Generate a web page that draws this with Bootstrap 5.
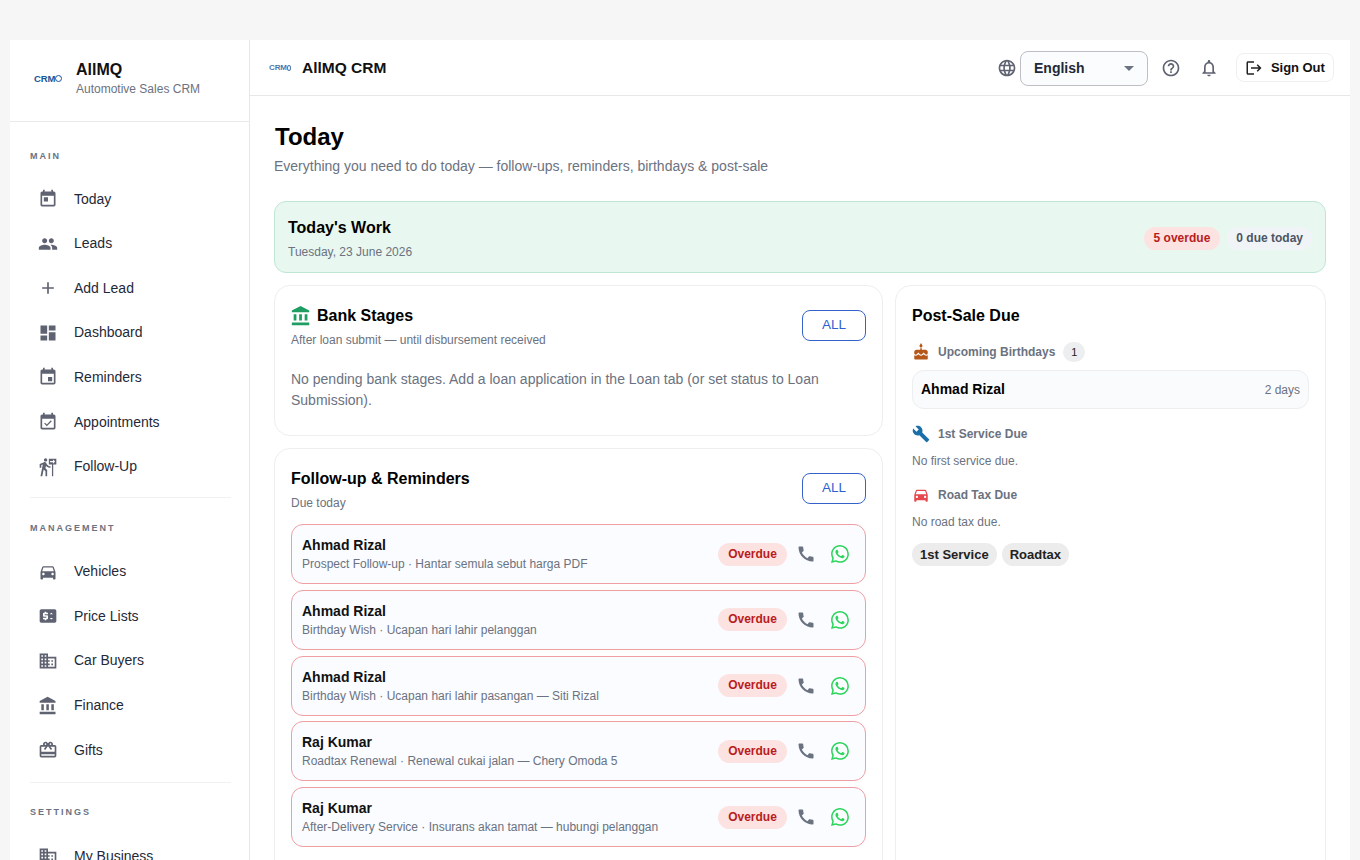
<!DOCTYPE html>
<html lang="en">
<head>
  <meta charset="UTF-8" />
  <title>AllMQ CRM - Today</title>
  <link href="https://cdn.jsdelivr.net/npm/bootstrap@5.3.3/dist/css/bootstrap.min.css" rel="stylesheet">
  <style>
    html, body { height: 860px; overflow: hidden; }
    body { background: #f6f6f6; padding: 40px 10px 0; font-family: "Liberation Sans", Arial, sans-serif; font-size: 14px; color: #111; }
    .app-frame { background: #fff; height: 820px; overflow: hidden; }
    .side-bar { width: 240px; flex: none; border-right: 1px solid #e6e7e9; }
    .side-head { height: 82px; padding: 0 0 4px 23px; border-bottom: 1px solid #e9eaec; }
    .crm-logo { color: #1a5596; font-weight: 700; line-height: 1; display: inline-flex; align-items: center; }
    .crm-logo i { display: inline-block; border: 1.5px solid #1a5596; border-radius: 50%; width: 7px; height: 7px; margin-left: 0; }
    .logo-lg { font-size: 9.5px; letter-spacing: -.1px; width: 35px; padding-left: 1px; }
    .logo-sm { font-size: 8px; letter-spacing: -.1px; width: 23px; padding-left: 1px; opacity: .8; }
    .logo-sm i { width: 6px; height: 6px; }
    .brand-name { font-size: 16px; font-weight: 700; line-height: 18px; color: #111; }
    .brand-sub { font-size: 12px; line-height: 16px; color: #6b7280; margin-top: 2px; }
    .side-nav { padding: 0 18px 0 20px; }
    .nav-title { font-size: 9px; font-weight: 700; letter-spacing: 2px; color: #6b7280; line-height: 12px; padding-top: 24px; padding-bottom: 15px; }
    .nav-first { padding-top: 28px; padding-bottom: 14.8px; }
    .nav-last { padding-top: 23px; padding-bottom: 16px; }
    .nav-row { display: flex; align-items: center; height: 44.6px; padding-left: 8px; color: #1f2937; font-size: 14px; text-decoration: none; }
    .nav-row svg { width: 20px; height: 20px; fill: #5f6270; margin-right: 16px; flex: none; }
    .nav-rule { border-top: 1px solid #f0f1f3; margin-top: 8.5px; }
    .nav-rule-low { margin-top: 9.5px; }
    .top-bar { height: 56px; padding: 0 16px 0 18px; border-bottom: 1px solid #e6e7e9; }
    .top-title { font-size: 15.5px; font-weight: 700; color: #111; margin-left: 11px; }
    .top-ico { width: 20px; height: 20px; fill: #5f6270; flex: none; }
    .globe-ico { margin-right: 3px; }
    .help-ico { margin-left: 13px; }
    .bell-ico { margin-left: 18px; margin-right: 17px; }
    .lang-select { width: 128px; height: 35px; margin-top: 1px; border: 1px solid #bdbfc4; border-radius: 8px; background: #fbfcfd; padding: 0 13px; font-weight: 700; color: #1f2937; }
    .lang-caret { width: 0; height: 0; border-left: 5.5px solid transparent; border-right: 5.5px solid transparent; border-top: 5.5px solid #6b7280; }
    .sign-btn { height: 29px; width: 98px; border: 1px solid #eef0f2; border-radius: 8px; background: #fff; font-size: 13px; font-weight: 700; color: #111; padding: 0 0 0 8px; letter-spacing: -.05px; }
    .sign-btn svg { width: 18px; height: 18px; fill: #222; margin-right: 8px; }
    .page-body { padding: 0 24px; }
    .page-title { font-size: 24px; font-weight: 700; line-height: 28px; color: #000; margin: 27px 0 0 1px; }
    .page-sub { font-size: 14px; line-height: 20px; color: #6b7280; margin-top: 5px; }
    .work-banner { height: 72px; margin-top: 25px; background: #e8f7ef; border: 1px solid #bfe6d5; border-radius: 12px; padding: 3px 13px 0 13px; }
    .work-title { font-size: 16px; font-weight: 700; line-height: 20px; color: #000; }
    .work-date { font-size: 12px; line-height: 16px; color: #6b7280; margin-top: 6px; }
    .pill-red { background: #fde2e2; color: #b91c1c; font-size: 12px; font-weight: 700; line-height: 23px; padding: 0 10px; border-radius: 12px; }
    .pill-grey { background: #f1f4f6; color: #4b5563; font-size: 12px; font-weight: 700; line-height: 23px; padding: 0 9px; border-radius: 12px; margin-left: 7px; }
    .col-wrap { display: flex; column-gap: 12px; margin-top: 12px; }
    .col-main { width: 609px; flex: none; }
    .col-side { width: 431px; flex: none; }
    .panel { background: #fff; border: 1px solid #eceef0; border-radius: 16px; padding: 19px 16px 16px; }
    .panel-bank { height: 151px; }
    .panel-due { height: 500px; margin-top: 12px; }
    .panel-post { height: 663px; }
    .panel-title { font-size: 16px; font-weight: 700; line-height: 22px; color: #000; }
    .panel-title svg { width: 22px; height: 22px; fill: #1f9d62; margin: -1px 5px 0 -1px; }
    .panel-sub { font-size: 12px; line-height: 16px; color: #6b7280; margin-top: 5px; }
    .panel-head { margin-bottom: 13px; }
    .all-btn { width: 64px; height: 31px; margin-top: 5px; border: 1px solid #3563c9; border-radius: 8px; background: #fff; color: #2f5fce; font-size: 13.5px; padding: 0; }
    .panel-empty { font-size: 14px; line-height: 21px; color: #6b7280; margin-top: 21px; }
    .due-row { height: 60px; margin-top: 5.8px; border: 1px solid #ef9ea3; border-radius: 12px; background: #fafcff; padding: 0 15px 0 10px; }
    .due-name { font-size: 14px; font-weight: 700; line-height: 18px; color: #111; }
    .due-note { font-size: 12px; line-height: 16px; color: #6b7280; margin-top: 2px; }
    .due-pill { background: #fde2e2; color: #b91c1c; font-size: 12px; font-weight: 700; line-height: 23px; width: 69px; text-align: center; border-radius: 12px; margin-right: 9px; }
    .call-ico { width: 20px; height: 20px; fill: #6b7280; margin-right: 15px; }
    .wa-ico { width: 18px; height: 18px; fill: #2bd45a; margin-right: 1px; }
    .post-head { font-size: 12px; font-weight: 700; line-height: 16px; color: #6b7280; }
    .post-head svg { width: 18px; height: 18px; margin-right: 8px; flex: none; }
    .head-bday { margin-top: 15px; }
    .head-service { margin-top: 16px; }
    .head-tax { margin-top: 17px; }
    .count-dot { background: #eceef0; color: #222; font-size: 11px; font-weight: 400; width: 22px; height: 20px; line-height: 20px; text-align: center; border-radius: 10px; margin-left: 8px; }
    .bday-row { height: 39px; margin-top: 8px; border: 1px solid #eceef0; border-radius: 12px; background: #fafbfc; padding: 0 8px; }
    .bday-name { font-size: 14px; font-weight: 700; color: #000; }
    .bday-days { font-size: 12px; color: #6b7280; }
    .post-empty { font-size: 12px; line-height: 16px; color: #6b7280; margin-top: 10px; }
    .tag-row { display: flex; column-gap: 5px; margin-top: 13px; }
    .tag-pill { background: #ececec; color: #222; font-size: 13px; font-weight: 700; line-height: 23px; padding: 0 8px; border-radius: 12px; }
  </style>
</head>
<body>

<!-- shared icons -->
<svg width="0" height="0" class="position-absolute">
  <symbol id="i-today" viewBox="0 0 24 24"><path d="M19 3h-1V1h-2v2H8V1H6v2H5c-1.11 0-1.99.9-1.99 2L3 19c0 1.1.89 2 2 2h14c1.1 0 2-.9 2-2V5c0-1.1-.9-2-2-2zm0 16H5V8h14v11zM7 10h5v5H7z"/></symbol>
  <symbol id="i-people" viewBox="0 0 24 24"><path d="M16 11c1.66 0 2.99-1.34 2.99-3S17.66 5 16 5c-1.66 0-3 1.34-3 3s1.34 3 3 3zm-8 0c1.66 0 2.99-1.34 2.99-3S9.66 5 8 5C6.34 5 5 6.34 5 8s1.34 3 3 3zm0 2c-2.33 0-7 1.17-7 3.5V19h14v-2.5c0-2.33-4.67-3.5-7-3.5zm8 0c-.29 0-.62.02-.97.05 1.16.84 1.97 1.97 1.97 3.45V19h6v-2.5c0-2.33-4.67-3.5-7-3.5z"/></symbol>
  <symbol id="i-add" viewBox="0 0 24 24"><path d="M19 13h-6v6h-2v-6H5v-2h6V5h2v6h6v2z"/></symbol>
  <symbol id="i-dash" viewBox="0 0 24 24"><path d="M3 13h8V3H3v10zm0 8h8v-6H3v6zm10 0h8V11h-8v10zm0-18v6h8V3h-8z"/></symbol>
  <symbol id="i-event" viewBox="0 0 24 24"><path d="M17 12h-5v5h5v-5zM16 1v2H8V1H6v2H5c-1.11 0-1.99.9-1.99 2L3 19c0 1.1.89 2 2 2h14c1.1 0 2-.9 2-2V5c0-1.1-.9-2-2-2h-1V1h-2zm3 18H5V8h14v11z"/></symbol>
  <symbol id="i-appt" viewBox="0 0 24 24"><path d="M16.53 11.06L15.47 10l-4.88 4.88-2.12-2.12-1.06 1.06L10.59 17l5.94-5.94zM19 3h-1V1h-2v2H8V1H6v2H5c-1.11 0-1.99.9-1.99 2L3 19c0 1.1.89 2 2 2h14c1.1 0 2-.9 2-2V5c0-1.1-.9-2-2-2zm0 16H5V8h14v11z"/></symbol>
  <symbol id="i-follow" viewBox="0 0 24 24"><path d="M9.12 5.5c1.1 0 2-.9 2-2s-.9-2-2-2-2 .9-2 2 .9 2 2 2zM5.75 8.9L3 23h2.1l1.75-8L9 17v6h2v-7.55L8.95 13.4l.6-3C10.85 12 12.8 13 15 13v-2c-1.85 0-3.45-1-4.35-2.45l-.95-1.6C9.35 6.35 8.7 6 8 6c-.25 0-.5.05-.75.15L2 8.3V13h2V9.65l1.75-.75M13 2v7h3.75v14h1.5V9H22V2h-9zm5.01 6V6.25H14.5v-1.5h3.51V3l2.49 2.5L18.01 8z"/></symbol>
  <symbol id="i-car" viewBox="0 0 24 24"><path d="M18.92 6.01C18.72 5.42 18.16 5 17.5 5h-11c-.66 0-1.21.42-1.42 1.01L3 12v8c0 .55.45 1 1 1h1c.55 0 1-.45 1-1v-1h12v1c0 .55.45 1 1 1h1c.55 0 1-.45 1-1v-8l-2.08-5.99zM6.5 16c-.83 0-1.5-.67-1.5-1.5S5.67 13 6.5 13s1.5.67 1.5 1.5S7.33 16 6.5 16zm11 0c-.83 0-1.5-.67-1.5-1.5s.67-1.5 1.5-1.5 1.5.67 1.5 1.5-.67 1.5-1.5 1.5zM5 11l1.5-4.5h11L19 11H5z"/></symbol>
  <symbol id="i-price" viewBox="0 0 24 24"><path d="M20 4H4c-1.11 0-1.99.89-1.99 2L2 18c0 1.11.89 2 2 2h16c1.11 0 2-.89 2-2V6c0-1.11-.89-2-2-2zm-8 6H8v1h3c.55 0 1 .45 1 1v3c0 .55-.45 1-1 1h-1v1H8v-1H6v-2h4v-1H7c-.55 0-1-.45-1-1V9c0-.55.45-1 1-1h1V7h2v1h2v2zm4 6.25l-2-2h4l-2 2zM14 10l2-2 2 2h-4z"/></symbol>
  <symbol id="i-domain" viewBox="0 0 24 24"><path d="M12 7V3H2v18h20V7H12zM6 19H4v-2h2v2zm0-4H4v-2h2v2zm0-4H4V9h2v2zm0-4H4V5h2v2zm4 12H8v-2h2v2zm0-4H8v-2h2v2zm0-4H8V9h2v2zm0-4H8V5h2v2zm10 12h-8v-2h2v-2h-2v-2h2v-2h-2V9h8v10zm-2-8h-2v2h2v-2zm0 4h-2v2h2v-2z"/></symbol>
  <symbol id="i-bank" viewBox="0 0 24 24"><path d="M4 10v7h3v-7H4zm6 0v7h3v-7h-3zM2 22h19v-3H2v3zm14-12v7h3v-7h-3zm-4.5-9L2 6v2h19V6l-9.5-5z"/></symbol>
  <symbol id="i-gift" viewBox="0 0 24 24"><path d="M20 6h-2.18c.11-.31.18-.65.18-1 0-1.66-1.34-3-3-3-1.05 0-1.96.54-2.5 1.35l-.5.67-.5-.68C10.96 2.54 10.05 2 9 2 7.34 2 6 3.34 6 5c0 .35.07.69.18 1H4c-1.11 0-1.99.89-1.99 2L2 19c0 1.11.89 2 2 2h16c1.11 0 2-.89 2-2V8c0-1.11-.89-2-2-2zm-5-2c.55 0 1 .45 1 1s-.45 1-1 1-1-.45-1-1 .45-1 1-1zM9 4c.55 0 1 .45 1 1s-.45 1-1 1-1-.45-1-1 .45-1 1-1zm11 15H4v-2h16v2zm0-5H4V8h5.08L7 10.83 8.62 12 11 8.76l1-1.36 1 1.36L15.38 12 17 10.83 14.92 8H20v6z"/></symbol>
  <symbol id="i-call" viewBox="0 0 24 24"><path d="M20.01 15.38c-1.23 0-2.42-.2-3.53-.56-.35-.12-.74-.03-1.01.24l-1.57 1.97c-2.83-1.35-5.48-3.9-6.89-6.83l1.95-1.66c.27-.28.35-.67.24-1.02-.37-1.11-.56-2.3-.56-3.53 0-.54-.45-.99-.99-.99H4.19C3.65 3 3 3.24 3 3.99 3 13.28 10.73 21 20.01 21c.71 0 .99-.63.99-1.18v-3.45c0-.54-.45-.99-.99-.99z"/></symbol>
  <symbol id="i-wa" viewBox="0 0 16 16"><path d="M13.601 2.326A7.854 7.854 0 0 0 7.994 0C3.627 0 .068 3.558.064 7.926c0 1.399.366 2.76 1.057 3.965L0 16l4.204-1.102a7.933 7.933 0 0 0 3.79.965h.004c4.368 0 7.926-3.558 7.93-7.93A7.898 7.898 0 0 0 13.6 2.326zM7.994 14.521a6.573 6.573 0 0 1-3.356-.92l-.24-.144-2.494.654.666-2.433-.156-.251a6.56 6.56 0 0 1-1.007-3.505c0-3.626 2.957-6.584 6.591-6.584a6.56 6.56 0 0 1 4.66 1.931 6.557 6.557 0 0 1 1.928 4.66c-.004 3.639-2.961 6.592-6.592 6.592zm3.615-4.934c-.197-.099-1.17-.578-1.353-.646-.182-.065-.315-.099-.445.099-.133.197-.513.646-.627.775-.114.133-.232.148-.43.05-.197-.1-.836-.308-1.592-.985-.59-.525-.985-1.175-1.103-1.372-.114-.198-.011-.304.088-.403.087-.088.197-.232.296-.346.1-.114.133-.198.198-.33.065-.134.034-.248-.015-.347-.05-.099-.445-1.076-.612-1.47-.16-.389-.323-.335-.445-.34-.114-.007-.247-.007-.38-.007a.729.729 0 0 0-.529.247c-.182.198-.691.677-.691 1.654 0 .977.71 1.916.81 2.049.098.133 1.394 2.132 3.383 2.992.47.205.84.326 1.129.418.475.152.904.129 1.246.08.38-.058 1.171-.48 1.338-.943.164-.464.164-.86.114-.943-.049-.084-.182-.133-.38-.232z"/></symbol>
</svg>

<div class="app-frame d-flex">

  <!-- Sidebar -->
  <aside class="side-bar">
    <div class="side-head d-flex align-items-center">
      <span class="crm-logo logo-lg">CRM<i></i></span>
      <div class="ms-2">
        <div class="brand-name">AllMQ</div>
        <div class="brand-sub">Automotive Sales CRM</div>
      </div>
    </div>
    <nav class="side-nav">
      <div class="nav-title nav-first">MAIN</div>
      <a class="nav-row" href="#"><svg><use href="#i-today"/></svg>Today</a>
      <a class="nav-row" href="#"><svg><use href="#i-people"/></svg>Leads</a>
      <a class="nav-row" href="#"><svg><use href="#i-add"/></svg>Add Lead</a>
      <a class="nav-row" href="#"><svg><use href="#i-dash"/></svg>Dashboard</a>
      <a class="nav-row" href="#"><svg><use href="#i-event"/></svg>Reminders</a>
      <a class="nav-row" href="#"><svg><use href="#i-appt"/></svg>Appointments</a>
      <a class="nav-row" href="#"><svg><use href="#i-follow"/></svg>Follow-Up</a>
      <div class="nav-rule"></div>
      <div class="nav-title">MANAGEMENT</div>
      <a class="nav-row" href="#"><svg><use href="#i-car"/></svg>Vehicles</a>
      <a class="nav-row" href="#"><svg><use href="#i-price"/></svg>Price Lists</a>
      <a class="nav-row" href="#"><svg><use href="#i-domain"/></svg>Car Buyers</a>
      <a class="nav-row" href="#"><svg><use href="#i-bank"/></svg>Finance</a>
      <a class="nav-row" href="#"><svg><use href="#i-gift"/></svg>Gifts</a>
      <div class="nav-rule nav-rule-low"></div>
      <div class="nav-title nav-last">SETTINGS</div>
      <a class="nav-row" href="#"><svg><use href="#i-domain"/></svg>My Business</a>
    </nav>
  </aside>

  <!-- Main -->
  <div class="flex-grow-1 overflow-hidden">
    <header class="top-bar d-flex align-items-center">
      <span class="crm-logo logo-sm">CRM<i></i></span>
      <span class="top-title">AllMQ CRM</span>
      <div class="ms-auto d-flex align-items-center">
        <svg class="top-ico globe-ico" viewBox="0 0 24 24"><path d="M11.99 2C6.47 2 2 6.48 2 12s4.47 10 9.99 10C17.52 22 22 17.52 22 12S17.52 2 11.99 2zm6.93 6h-2.95c-.32-1.25-.78-2.45-1.38-3.56 1.84.63 3.37 1.91 4.33 3.56zM12 4.04c.83 1.2 1.48 2.53 1.91 3.96h-3.82c.43-1.43 1.08-2.76 1.91-3.96zM4.26 14C4.1 13.36 4 12.69 4 12s.1-1.36.26-2h3.38c-.08.66-.14 1.32-.14 2 0 .68.06 1.34.14 2H4.26zm.82 2h2.95c.32 1.25.78 2.45 1.38 3.56-1.84-.63-3.37-1.9-4.33-3.56zm2.95-8H5.08c.96-1.66 2.49-2.93 4.33-3.56C8.81 5.55 8.35 6.75 8.03 8zM12 19.96c-.83-1.2-1.48-2.53-1.91-3.96h3.82c-.43 1.43-1.08 2.76-1.91 3.96zM14.34 14H9.66c-.09-.66-.16-1.32-.16-2 0-.68.07-1.35.16-2h4.68c.09.65.16 1.32.16 2 0 .68-.07 1.34-.16 2zm.25 5.56c.6-1.11 1.06-2.31 1.38-3.56h2.95c-.96 1.65-2.49 2.93-4.33 3.56zM16.36 14c.08-.66.14-1.32.14-2 0-.68-.06-1.34-.14-2h3.38c.16.64.26 1.31.26 2s-.1 1.36-.26 2h-3.38z"/></svg>
        <div class="lang-select d-flex align-items-center justify-content-between">English<span class="lang-caret"></span></div>
        <svg class="top-ico help-ico" viewBox="0 0 24 24"><path d="M11 18h2v-2h-2v2zm1-16C6.48 2 2 6.48 2 12s4.48 10 10 10 10-4.48 10-10S17.52 2 12 2zm0 18c-4.41 0-8-3.59-8-8s3.59-8 8-8 8 3.59 8 8-3.59 8-8 8zm0-14c-2.21 0-4 1.79-4 4h2c0-1.1.9-2 2-2s2 .9 2 2c0 2-3 1.75-3 5h2c0-2.25 3-2.5 3-5 0-2.21-1.79-4-4-4z"/></svg>
        <svg class="top-ico bell-ico" viewBox="0 0 24 24"><path d="M12 22c1.1 0 2-.9 2-2h-4c0 1.1.9 2 2 2zm6-6v-5c0-3.07-1.63-5.64-4.5-6.32V4c0-.83-.67-1.5-1.5-1.5s-1.5.67-1.5 1.5v.68C7.64 5.36 6 7.92 6 11v5l-2 2v1h16v-1l-2-2zm-2 1H8v-6c0-2.48 1.51-4.5 4-4.5s4 2.02 4 4.5v6z"/></svg>
        <button class="sign-btn d-flex align-items-center" type="button"><svg viewBox="0 0 24 24"><path d="M17 7l-1.41 1.41L18.17 11H8v2h10.17l-2.58 2.58L17 17l5-5zM4 5h8V3H4c-1.1 0-2 .9-2 2v14c0 1.1.9 2 2 2h8v-2H4V5z"/></svg>Sign Out</button>
      </div>
    </header>

    <main class="page-body">
      <h1 class="page-title">Today</h1>
      <div class="page-sub">Everything you need to do today — follow-ups, reminders, birthdays &amp; post-sale</div>

      <div class="work-banner d-flex align-items-center justify-content-between">
        <div>
          <div class="work-title">Today's Work</div>
          <div class="work-date">Tuesday, 23 June 2026</div>
        </div>
        <div class="d-flex align-items-center">
          <span class="pill-red">5 overdue</span>
          <span class="pill-grey">0 due today</span>
        </div>
      </div>

      <div class="col-wrap">
        <div class="col-main">
          <section class="panel panel-bank">
            <div class="d-flex justify-content-between align-items-start">
              <div>
                <div class="panel-title d-flex align-items-center"><svg><use href="#i-bank"/></svg>Bank Stages</div>
                <div class="panel-sub">After loan submit — until disbursement received</div>
              </div>
              <button class="all-btn" type="button">ALL</button>
            </div>
            <div class="panel-empty">No pending bank stages. Add a loan application in the Loan tab (or set status to Loan Submission).</div>
          </section>

          <section class="panel panel-due">
            <div class="panel-head d-flex justify-content-between align-items-start">
              <div>
                <div class="panel-title">Follow-up &amp; Reminders</div>
                <div class="panel-sub">Due today</div>
              </div>
              <button class="all-btn" type="button">ALL</button>
            </div>
            <div id="dueList"></div>
          </section>
        </div>

        <div class="col-side">
          <section class="panel panel-post">
            <div class="panel-title">Post-Sale Due</div>

            <div class="post-head head-bday d-flex align-items-center">
              <svg fill="#b5561a" viewBox="0 0 24 24"><path d="M12 6c1.11 0 2-.9 2-2 0-.38-.1-.73-.29-1.03L12 0l-1.71 2.97c-.19.3-.29.65-.29 1.03 0 1.1.9 2 2 2zm4.6 9.99l-1.07-1.07-1.08 1.07c-1.3 1.3-3.58 1.31-4.89 0l-1.07-1.07-1.09 1.07C6.75 16.64 5.88 17 4.96 17c-.73 0-1.4-.23-1.96-.61V21c0 .55.45 1 1 1h16c.55 0 1-.45 1-1v-4.61c-.56.38-1.23.61-1.96.61-.92 0-1.79-.36-2.44-1.01zM18 9h-5V7h-2v2H6c-1.66 0-3 1.34-3 3v1.54c0 1.08.88 1.96 1.96 1.96.52 0 1.02-.2 1.38-.57l2.14-2.13 2.13 2.13c.74.74 2.03.74 2.77 0l2.14-2.13 2.13 2.13c.37.37.86.57 1.38.57 1.08 0 1.96-.88 1.96-1.96V12C21 10.34 19.66 9 18 9z"/></svg>
              Upcoming Birthdays<span class="count-dot">1</span>
            </div>
            <div class="bday-row d-flex align-items-center justify-content-between">
              <span class="bday-name">Ahmad Rizal</span><span class="bday-days">2 days</span>
            </div>

            <div class="post-head head-service d-flex align-items-center">
              <svg fill="#1a6fa8" viewBox="0 0 24 24"><path d="M22.7 19l-9.1-9.1c.9-2.3.4-5-1.5-6.9-2-2-5-2.4-7.4-1.3L9 6 6 9 1.6 4.7C.4 7.1.9 10.1 2.9 12.1c1.9 1.9 4.6 2.4 6.9 1.5l9.1 9.1c.4.4 1 .4 1.4 0l2.3-2.3c.5-.4.5-1.1.1-1.4z"/></svg>
              1st Service Due
            </div>
            <div class="post-empty">No first service due.</div>

            <div class="post-head head-tax d-flex align-items-center">
              <svg fill="#e5484d" viewBox="0 0 24 24"><path d="M18.92 6.01C18.72 5.42 18.16 5 17.5 5h-11c-.66 0-1.21.42-1.42 1.01L3 12v8c0 .55.45 1 1 1h1c.55 0 1-.45 1-1v-1h12v1c0 .55.45 1 1 1h1c.55 0 1-.45 1-1v-8l-2.08-5.99zM6.5 16c-.83 0-1.5-.67-1.5-1.5S5.67 13 6.5 13s1.5.67 1.5 1.5S7.33 16 6.5 16zm11 0c-.83 0-1.5-.67-1.5-1.5s.67-1.5 1.5-1.5 1.5.67 1.5 1.5-.67 1.5-1.5 1.5zM5 11l1.5-4.5h11L19 11H5z"/></svg>
              Road Tax Due
            </div>
            <div class="post-empty">No road tax due.</div>

            <div class="tag-row">
              <span class="tag-pill">1st Service</span>
              <span class="tag-pill">Roadtax</span>
            </div>
          </section>
        </div>
      </div>
    </main>
  </div>
</div>

<script src="https://cdn.jsdelivr.net/npm/bootstrap@5.3.3/dist/js/bootstrap.bundle.min.js"></script>
<script>
  const dueItems = [
    ["Ahmad Rizal", "Prospect Follow-up · Hantar semula sebut harga PDF"],
    ["Ahmad Rizal", "Birthday Wish · Ucapan hari lahir pelanggan"],
    ["Ahmad Rizal", "Birthday Wish · Ucapan hari lahir pasangan — Siti Rizal"],
    ["Raj Kumar", "Roadtax Renewal · Renewal cukai jalan — Chery Omoda 5"],
    ["Raj Kumar", "After-Delivery Service · Insurans akan tamat — hubungi pelanggan"]
  ];
  document.getElementById("dueList").innerHTML = dueItems.map(d => `
    <div class="due-row d-flex align-items-center">
      <div class="flex-grow-1">
        <div class="due-name">${d[0]}</div>
        <div class="due-note">${d[1]}</div>
      </div>
      <span class="due-pill">Overdue</span>
      <svg class="call-ico"><use href="#i-call"/></svg>
      <svg class="wa-ico"><use href="#i-wa"/></svg>
    </div>`).join("");
</script>

</body>
</html>
